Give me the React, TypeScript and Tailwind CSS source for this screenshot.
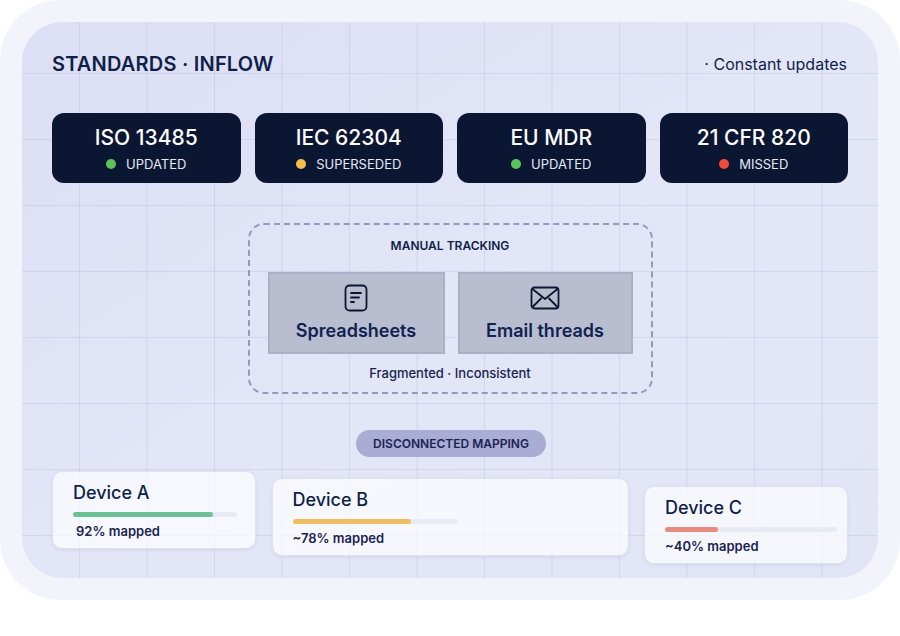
export default function App() {
  const font = { fontFamily: "Inter, 'Noto Sans', sans-serif" };
  const cards = [
    { t: "ISO 13485", s: "UPDATED", c: "bg-[#5ac35a]" },
    { t: "IEC 62304", s: "SUPERSEDED", c: "bg-[#f5bd4a]" },
    { t: "EU MDR", s: "UPDATED", c: "bg-[#5ac35a]" },
    { t: "21 CFR 820", s: "MISSED", c: "bg-[#ee4b3b]" },
  ];
  const devices = [
    { n: "Device A", p: "92% mapped", w: "w-[204px]", mt: "mt-0", track: "w-[164px]", fill: "w-[140px]", col: "bg-[#6cc197]", tp: "mt-[5px] ml-[3px]" },
    { n: "Device B", p: "~78% mapped", w: "w-[357px]", mt: "mt-[7px]", track: "w-[165px]", fill: "w-[118px]", col: "bg-[#efbe62]", tp: "mt-[5px]" },
    { n: "Device C", p: "~40% mapped", w: "w-[204px]", mt: "mt-[15px]", track: "w-[172px]", fill: "w-[53px]", col: "bg-[#ea8a7e]", tp: "mt-[5px]" },
  ];
  return (
    <div style={font} className="w-[900px] h-[636px] bg-white">
      <div className="w-[900px] h-[600px] rounded-[60px] bg-[#f3f4fb] p-[22px]">
        <div className="h-[556px] rounded-[40px] overflow-hidden bg-gradient-to-br from-[#dcdff5] via-[#e3e6f7] to-[#e1e5f6]">
          <div className="h-full bg-[linear-gradient(to_right,rgba(150,160,205,0.22)_1px,transparent_1px),linear-gradient(to_bottom,rgba(150,160,205,0.22)_1px,transparent_1px)] bg-[length:67.5px_66px] bg-[position:57px_51px] px-[30px] pt-[30px]">
            <div className="flex justify-between items-center h-[24px]">
              <div className="text-[20px] font-semibold text-[#0f1f4a] tracking-[0.2px]">STANDARDS · INFLOW</div>
              <div className="text-[16px] text-[#0f1f4a] mr-[1px]">· Constant updates</div>
            </div>
            <div className="grid grid-cols-4 gap-[14px] mt-[37px]">
              {cards.map((c) => (
                <div key={c.t} className="h-[70px] rounded-[12px] bg-[#0b1633] flex flex-col items-center justify-center">
                  <div className="text-[21px] font-medium text-white leading-[26px]">{c.t}</div>
                  <div className="flex items-center gap-[10px] mt-[5px]">
                    <span className={`w-[10px] h-[10px] rounded-full ${c.c}`} />
                    <span className="text-[13px] text-[#e6e9f2] leading-[16px]">{c.s}</span>
                  </div>
                </div>
              ))}
            </div>
            <div className="mx-auto mt-[40px] w-[405px] h-[171px] rounded-[16px] border-2 border-dashed border-[#9597bc] flex flex-col items-center">
              <div className="mt-[13px] text-[12px] font-semibold text-[#0f1f4a] leading-[16px]">MANUAL TRACKING</div>
              <div className="flex gap-[13px] mt-[18px]">
                <div className="w-[177px] h-[82px] bg-[#b8bdd0] border-2 border-[#aab0c5] flex flex-col items-center pt-[10px]">
                  <svg width="24" height="28" viewBox="0 0 24 28" fill="none" stroke="#0b1633" strokeWidth="1.8" strokeLinecap="round"><rect x="1.5" y="1.5" width="21" height="25" rx="4"/><path d="M7 9h10M7 13.5h8M7 18h3"/></svg>
                  <div className="mt-[7px] text-[18px] font-semibold text-[#0f2350] leading-[24px]">Spreadsheets</div>
                </div>
                <div className="w-[175px] h-[82px] bg-[#b8bdd0] border-2 border-[#aab0c5] flex flex-col items-center pt-[12px]">
                  <svg width="30" height="24" viewBox="0 0 30 24" fill="none" stroke="#0b1633" strokeWidth="1.8" strokeLinejoin="round"><rect x="1.5" y="1.5" width="27" height="21" rx="3"/><path d="M2.5 3l12.5 10L27.5 3M2.5 21l9-9M27.5 21l-9-9"/></svg>
                  <div className="mt-[9px] text-[18px] font-semibold text-[#0f2350] leading-[24px]">Email threads</div>
                </div>
              </div>
              <div className="mt-[10px] text-[13px] font-medium text-[#1a2350]">Fragmented · Inconsistent</div>
            </div>
            <div className="flex justify-center mt-[36px]">
              <div className="ml-[2px] h-[27px] w-[190px] rounded-full bg-[#a9acd3] flex items-center justify-center text-[12px] font-semibold text-[#1a2350]">DISCONNECTED MAPPING</div>
            </div>
            <div className="flex justify-between items-start mt-[14px]">
              {devices.map((d) => (
                <div key={d.n} className={`${d.w} ${d.mt} h-[78px] rounded-[10px] bg-white/70 border border-[#dde0ee] shadow-[0_1px_3px_rgba(80,90,140,0.12)] px-[20px] pt-[10px]`}>
                  <div className="text-[18px] font-medium text-[#0f1f4a] leading-[22px]">{d.n}</div>
                  <div className={`${d.track} h-[5px] rounded-full bg-[#e8ebf5] mt-[8px]`}>
                    <div className={`${d.fill} h-[5px] rounded-full ${d.col}`} />
                  </div>
                  <div className={`${d.tp} text-[13px] font-semibold text-[#1a2350]`}>{d.p}</div>
                </div>
              ))}
            </div>
          </div>
        </div>
      </div>
    </div>
  );
}
